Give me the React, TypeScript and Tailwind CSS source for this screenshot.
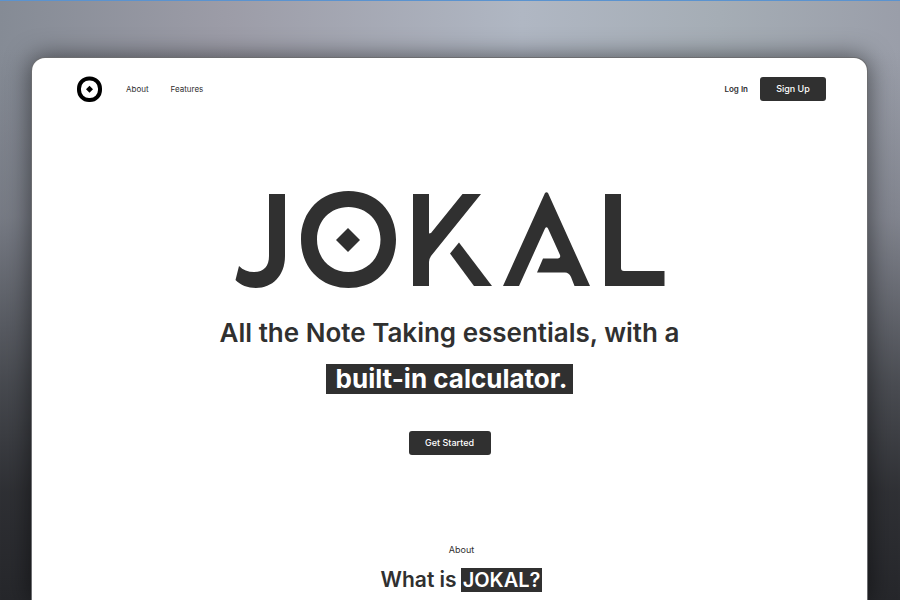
import React from "react";

function Wordmark() {
  return (
    <svg viewBox="235 191 430 98" className="w-[430px] max-w-full fill-[#303030]" role="img" aria-label="JOKAL">
      <path d="M269 194H285V256C285 276 272 288 256 288C248 288 240 285 235.5 280L239 266C243 270 248 272 254 272C264 272 269 266 269 256Z" />
      <path
        fillRule="evenodd"
        d="M348.5 191C376 191 396 211 396 239.5C396 268 376 288 348.5 288C321 288 301 268 301 239.5C301 211 321 191 348.5 191ZM348.5 207C330 207 317 221 317 239.5C317 258 330 272 348.5 272C367 272 380.5 258 380.5 239.5C380.5 221 367 207 348.5 207Z"
      />
      <path d="M348 228L360 240L348 252L336 240Z" />
      <path d="M413 194H429V233.5L431 233L462.5 194H481L431 256Q429 259 429 262V286H413Z" />
      <path d="M459 242.5L492 286H474L450 253.5Z" />
      <path d="M545 193Q546.5 191.5 548 193L590 286H574.5L571 277Q569 272.5 565 272.5H537L543 258.5H558Q561 258 560 255L548 228.5Q546.5 226 545 228.5L519 286H503Z" />
      <path d="M605 194H621V268Q621 271 624 271H664.5V286H605Z" />
    </svg>
  );
}

function Emblem() {
  return (
    <svg viewBox="0 0 26 26" className="size-[26px]" aria-hidden="true">
      <rect x="3" y="2.5" width="21" height="21.5" rx="10" fill="none" stroke="#000" strokeWidth="4" />
      <path d="M13.5 9.7L17 13.2L13.5 16.7L10 13.2Z" />
    </svg>
  );
}

export default function App() {
  return (
    <div className="min-h-screen overflow-hidden border-t border-[#5b93cf] bg-[linear-gradient(to_bottom,transparent_8%,#686a7380_36%,#3c3e43d9_64%,#2a2b2ff2_82%,#26272b_100%),linear-gradient(to_right,#858b95,#9c9ca7_25%,#b0b7c3_58%,#a5adb5_80%,#9a9ea9)] pt-[57px] font-['Inter',sans-serif] text-[#303030]">
      <div className="mr-[33px] ml-8 flex min-h-[542px] flex-col rounded-t-[13px] bg-white shadow-[0_0_0_1px_#6c6d70,0_0_24px_2px_#00000080]">
        <header className="flex items-center justify-between pt-[18px] pr-[41px] pl-11">
          <nav className="flex items-center text-[8px]">
            <a href="#home" aria-label="Jokal home"><Emblem /></a>
            <a href="#about" className="ml-6">About</a>
            <a href="#features" className="ml-[22px]">Features</a>
          </nav>
          <div className="flex items-center gap-3">
            <a href="#login" className="text-[8px] font-semibold">Log In</a>
            <button className="h-6 w-[66px] rounded-[3px] bg-[#303030] text-[9px] font-medium text-white">Sign Up</button>
          </div>
        </header>
        <main className="flex flex-col items-center">
          <h1 className="mt-[89px]"><Wordmark /></h1>
          <h2 className="mt-[21px] text-center text-[26px] leading-[46px] font-semibold">
            All the Note Taking essentials, with a
            <br />
            <span className="inline-block bg-[#303030] pr-1.5 pl-2.5 leading-[30px] font-bold text-white">built-in calculator.</span>
          </h2>
          <button className="mt-[29px] h-6 w-[82px] rounded-[3px] bg-[#303030] text-[9px] font-medium text-white">Get Started</button>
          <section id="about" className="mt-[89px] ml-6 flex flex-col items-center">
            <p className="text-[9px] leading-3">About</p>
            <h3 className="mt-3 flex items-center gap-1 text-[21px] leading-6 font-semibold">
              What is <span className="bg-[#303030] px-0.5 text-xl leading-6 text-white">JOKAL?</span>
            </h3>
          </section>
        </main>
      </div>
    </div>
  );
}
